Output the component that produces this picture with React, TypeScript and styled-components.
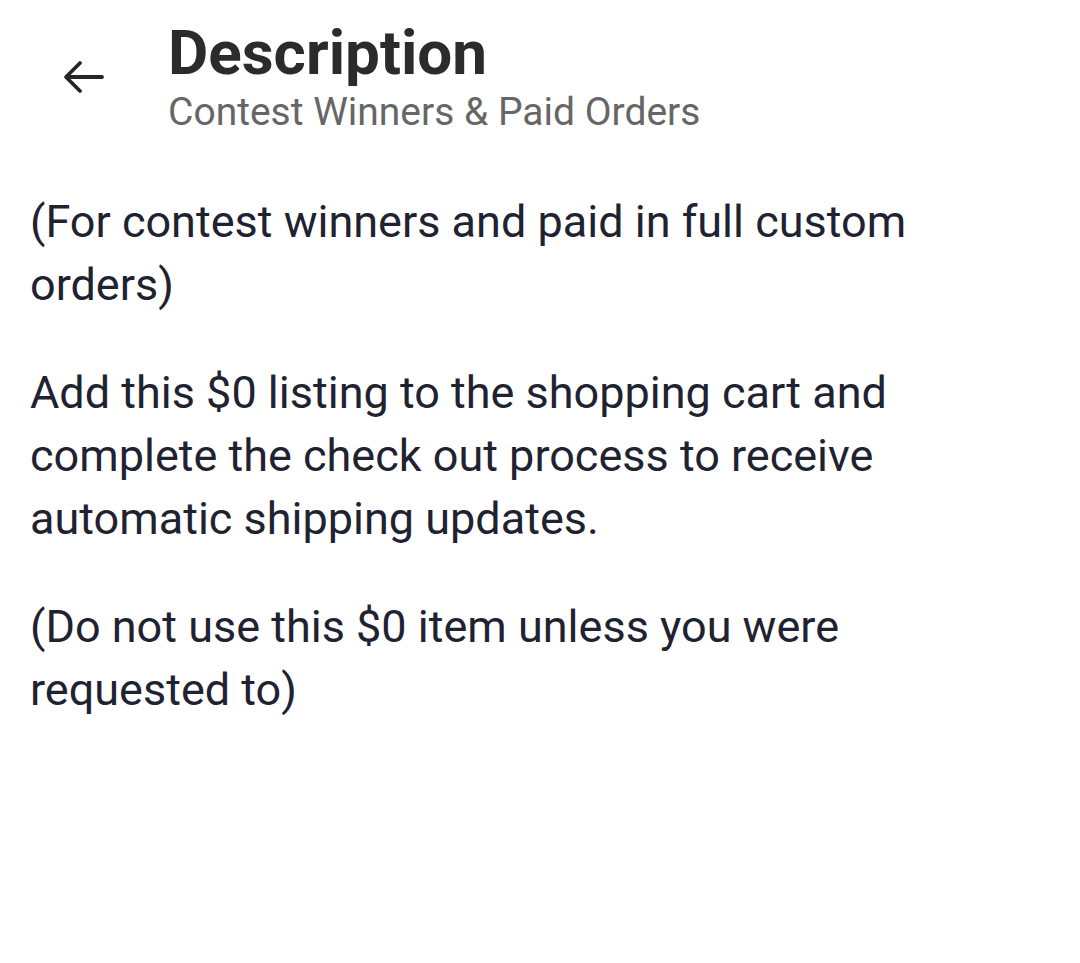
import React from 'react'
import styled, { createGlobalStyle } from 'styled-components';

const GlobalStyle = createGlobalStyle`
    body {
        margin: 0;
        background: #ffffff;
        font-family: "Roboto", "Noto Sans", sans-serif;
    }
`;

const paragraphs = [
    "(For contest winners and paid in full custom orders)",
    "Add this $0 listing to the shopping cart and complete the check out process to receive automatic shipping updates.",
    "(Do not use this $0 item unless you were requested to)",
];

const BackArrow = () => (
    <svg width="42" height="34" viewBox="0 0 42 34" fill="none">
        <path
            d="M39 17H4M17 3L3 17l14 14"
            stroke="#262626"
            strokeWidth="3.8"
            strokeLinecap="round"
            strokeLinejoin="round"
        />
    </svg>
);

const App = () => {
  return (
    <>
        <GlobalStyle />
        <PageContainer>
            <HeaderRow>
                <BackButton aria-label="Back">
                    <BackArrow />
                </BackButton>
                <TitleBlock>
                    <Title>Description</Title>
                    <SubTitle>Contest Winners &amp; Paid Orders</SubTitle>
                </TitleBlock>
            </HeaderRow>
            <Body>
                {paragraphs.map((text) => (
                    <Paragraph key={text}>{text}</Paragraph>
                ))}
            </Body>
        </PageContainer>
    </>
  )
};

const PageContainer = styled.div`
    width: 1080px;
    min-height: 963px;
    box-sizing: border-box;
    padding: 18px 30px 0 30px;
`;

const HeaderRow = styled.div`
    display: flex;
    align-items: center;
`;

const BackButton = styled.button`
    width: 138px;
    height: 60px;
    padding: 0 0 0 33px;
    margin: 0;
    border: none;
    background: transparent;
    display: flex;
    align-items: center;
    justify-content: flex-start;
    cursor: pointer;
`;

const TitleBlock = styled.div`
    display: flex;
    flex-direction: column;
`;

const Title = styled.h1`
    margin: 0;
    font-size: 62px;
    font-weight: 700;
    line-height: 70px;
    color: #2b2b2b;
`;

const SubTitle = styled.div`
    font-size: 39px;
    font-weight: 400;
    line-height: 48px;
    color: #666666;
`;

const Body = styled.div`
    margin-top: 54px;
    width: 920px;
    display: flex;
    flex-direction: column;
    gap: 45px;
`;

const Paragraph = styled.p`
    margin: 0;
    font-size: 45px;
    font-weight: 400;
    line-height: 63px;
    color: #1f2230;
`;

export default App;
